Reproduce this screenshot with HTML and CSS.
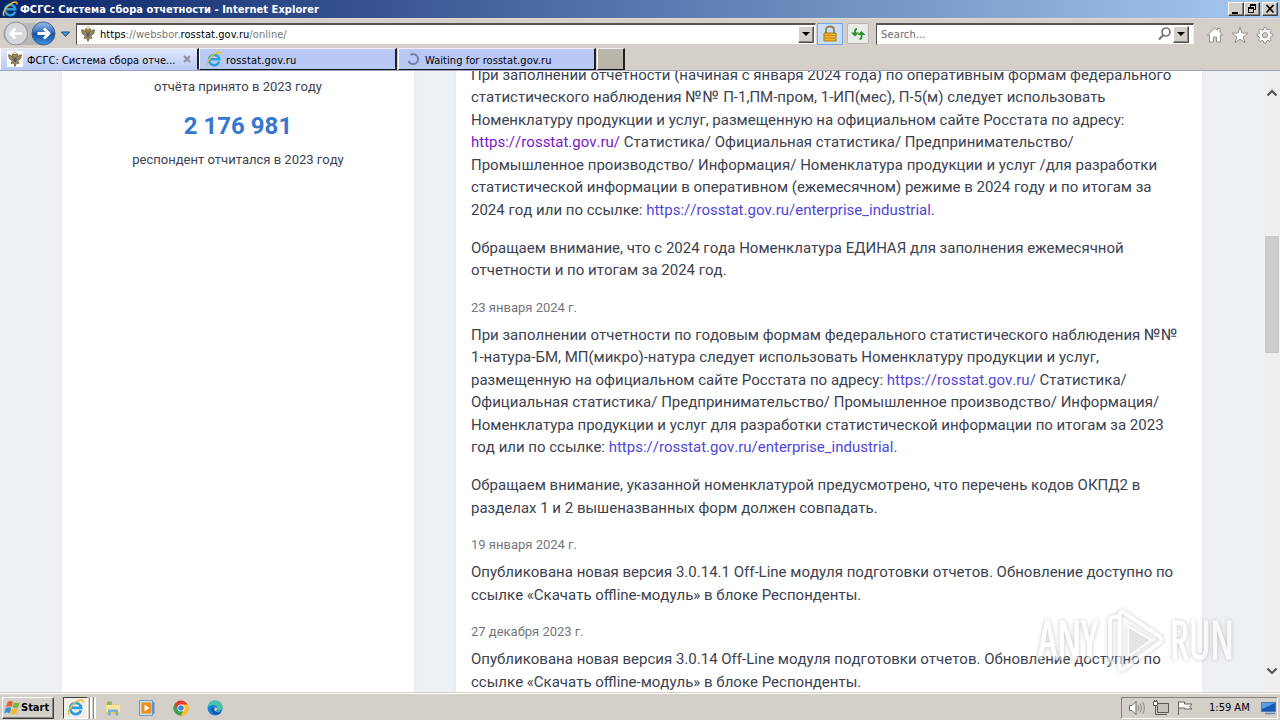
FILE: index.html
```html
<!DOCTYPE html>
<html lang="ru">
<head>
<meta charset="utf-8">
<title>ФСГС: Система сбора отчетности</title>
<link rel="stylesheet" href="styles.css">
</head>
<body>
<svg class="defs" width="0" height="0">
  <defs>
    <linearGradient id="blueBall" x1="0" y1="0" x2="0" y2="1"><stop offset="0" stop-color="#9cc0e8"/><stop offset=".45" stop-color="#2f6fc0"/><stop offset=".5" stop-color="#1450a4"/><stop offset="1" stop-color="#3f96e0"/></linearGradient>
    <symbol id="ie" viewBox="0 0 16 16">
      <path d="M13.2 10.6A5.2 5.2 0 1 1 13.4 8.3H4.6" fill="none" stroke="#2d9fe0" stroke-width="2.5"/>
      <path d="M2.2 15C-.4 12.4 3.5 6 8.500 2.800 12 .5 15.600 .1 15 3.500" fill="none" stroke="#e9c32f" stroke-width="1.400"/>
    </symbol>
    <symbol id="eagle" viewBox="0 0 16 16">
      <path d="M8 4 6.500 2.500 5 3.500 6.200 6 3.200 4 1.500 3.800 2.200 7.500 5.300 10 4 12.500 6.500 12 8 15.500 9.500 12 12 12.500 10.700 10 13.800 7.500 14.500 3.800 12.800 4 9.800 6 11 3.500 9.500 2.500Z" fill="#9b8a45" stroke="#5b5636" stroke-width=".7"/>
      <path d="M6.800 1.800h2.400L8 .3Z" fill="#c9a326"/><path d="M6.500 6.500h3v3.500L8 11.200 6.500 10Z" fill="#4858a0"/>
    </symbol>
  </defs>
</svg>
<header class="titlebar">
  <svg class="title-ico" viewBox="0 0 16 16"><use href="#ie"/></svg>
  <span class="title-text">ФСГС: Система сбора отчетности - Internet Explorer</span>
  <div class="winbtns">
    <span class="wb"><svg viewBox="0 0 14 12"><path d="M3 9h6v2H3z"/></svg></span>
    <span class="wb"><svg viewBox="0 0 14 12"><path d="M5 1h6v6H9V6h1V3H6v1H5z"/><path d="M3 4h6v6H3zm1 2v3h4V6z" fill-rule="evenodd"/></svg></span>
    <span class="wb close"><svg viewBox="0 0 14 12"><path d="M3.500 2 10.500 9.500M10.500 2 3.500 9.500" stroke="#000" stroke-width="1.700"/></svg></span>
  </div>
</header>
<div class="toolbar">
  <svg class="nav" viewBox="0 0 74 28">
    <rect x="3" y="3" width="50" height="22" rx="11" fill="#b9b8b8"/>
    <circle cx="16" cy="13.500" r="11.500" fill="#d5d7dc" stroke="#8d9096"/>
    <path d="M22 13.500H11M15.500 8.500l-5 5 5 5" fill="none" stroke="#fff" stroke-width="2.600"/>
    <circle cx="43.500" cy="13.500" r="11.500" fill="url(#blueBall)" stroke="#4a6288"/>
    <path d="M37.500 13.500h11M44 8.500l5 5-5 5" fill="none" stroke="#fff" stroke-width="2.800"/>
    <path d="M61.500 12h8l-4 4.500z" fill="#4b9bd5" stroke="#20486e"/>
  </svg>
  <div class="field address">
    <svg class="i16" viewBox="0 0 16 16"><use href="#eagle"/></svg>
    <span class="url"><b>https</b>://websbor.<b>rosstat.gov.ru</b>/online/</span>
    <span class="drop"></span>
  </div>
  <span class="lock"><svg viewBox="0 0 16 18"><path d="M4 9V5q0-3.500 4-3.500T12 5v4" fill="none" stroke="#9a8148" stroke-width="1.800"/><path d="M2 8h12v8H2z" fill="#f0b62c" stroke="#a97716"/><path d="M3 10.500h10M3 13.200h10" stroke="#c78917"/></svg></span>
  <span class="refresh"><svg viewBox="0 0 16 16"><path d="M7 3Q5 3 5 5v3M9.500 13q2 0 2-2V8" fill="none" stroke="#269726" stroke-width="1.800"/><path d="M1 6.500h8L5 10.500zM7.500 9h8l-4-4z" fill="#249524"/></svg></span>
  <div class="field search">
    <span class="placeholder">Search...</span>
    <svg class="mag" viewBox="0 0 16 16"><circle cx="9" cy="6" r="4" fill="none" stroke="#77777d" stroke-width="1.700"/><path d="M6.200 9 2 13.500" stroke="#77777d" stroke-width="2.200"/></svg>
    <span class="drop"></span>
  </div>
  <div class="tools">
    <svg viewBox="0 0 18 18"><path d="M1.500 9 9 1.800l2.500 2.400V2.500h2.500v4L16.500 9H14.500v7h-4v-5h-3v5h-4V9z" fill="#fff" stroke="#96928d"/></svg>
    <svg viewBox="0 0 18 18"><path d="M9 1.200 11 7l6 .1-4.800 3.600 1.800 5.900L9 13.100l-5 3.500 1.800-5.900L1 7.100 7 7z" fill="#fff" stroke="#96928d"/></svg>
    <svg viewBox="0 0 18 18"><path d="m8 1.500 2 0 .5 2 1.500.6 1.800-1.100 1.500 1.500-1.100 1.800.6 1.500 2 .4v2l-2 .5-.6 1.500 1.100 1.800-1.500 1.500-1.800-1.100-1.500.6-.5 2h-2l-.5-2-1.500-.6-1.800 1.100-1.500-1.500 1.100-1.800-.6-1.500-2-.5v-2l2-.4.6-1.500-1.100-1.800L4.200 3 6 4.100l1.500-.6z" fill="#fff" stroke="#96928d"/><circle cx="9" cy="9.200" r="2.600" fill="#d4cfc9" stroke="#96928d"/></svg>
  </div>
</div>
<nav class="tabs">
  <div class="tab active"><svg class="i16" viewBox="0 0 16 16"><path fill="#fff" d="M0 0h16v16H0z"/><use href="#eagle"/></svg><span class="t1">ФСГС: Система сбора отче...</span><svg class="tabx" viewBox="0 0 8 8"><path d="M1 1l6 6M7 1 1 7" stroke="#8b8f9d" stroke-width="1.800"/></svg></div>
  <div class="tab"><svg class="i16" viewBox="0 0 16 16"><use href="#ie"/></svg><span class="t2">rosstat.gov.ru</span></div>
  <div class="tab"><svg class="i16" viewBox="0 0 16 16"><path d="M5.500 3.800A5 5 0 1 1 3.500 10" fill="none" stroke="#7582a8" stroke-width="2"/></svg><span class="t3">Waiting for rosstat.gov.ru</span></div>
  <div class="newtab"></div>
</nav>
<main class="page">
  <aside class="side">
    <p>отчёта принято в 2023 году</p>
    <strong>2 176 981</strong>
    <p>респондент отчитался в 2023 году</p>
  </aside>
  <article class="news">
    <p class="first">При заполнении отчетности (начиная с января 2024 года) по оперативным формам федерального<br>статистического наблюдения <span class="num">№№</span> П-1,ПМ-пром, 1-ИП(мес), П-5(м) следует использовать<br>Номенклатуру продукции и услуг, размещенную на официальном сайте Росстата по адресу:<br><a class="visited">https://rosstat.gov.ru/</a> Статистика/ Официальная статистика/ Предпринимательство/<br>Промышленное производство/ Информация/ Номенклатура продукции и услуг /для разработки<br>статистической информации в оперативном (ежемесячном) режиме в 2024 году и по итогам за<br>2024 год или по ссылке: <a>https://rosstat.gov.ru/enterprise_industrial</a>.</p>
    <p>Обращаем внимание, что с 2024 года Номенклатура ЕДИНАЯ для заполнения ежемесячной<br>отчетности и по итогам за 2024 год.</p>
    <time>23 января 2024 г.</time>
    <p class="lead">При заполнении отчетности по годовым формам федерального статистического наблюдения <span class="num">№№</span><br>1-натура-БМ, МП(микро)-натура следует использовать Номенклатуру продукции и услуг,<br>размещенную на официальном сайте Росстата по адресу: <a>https://rosstat.gov.ru/</a> Статистика/<br>Официальная статистика/ Предпринимательство/ Промышленное производство/ Информация/<br>Номенклатура продукции и услуг для разработки статистической информации по итогам за 2023<br>год или по ссылке: <a>https://rosstat.gov.ru/enterprise_industrial</a>.</p>
    <p>Обращаем внимание, указанной номенклатурой предусмотрено, что перечень кодов ОКПД2 в<br>разделах 1 и 2 вышеназванных форм должен совпадать.</p>
    <time>19 января 2024 г.</time>
    <p class="lead">Опубликована новая версия 3.0.14.1 Off-Line модуля подготовки отчетов. Обновление доступно по<br>ссылке «Скачать offline-модуль» в блоке Респонденты.</p>
    <time>27 декабря 2023 г.</time>
    <p class="lead">Опубликована новая версия 3.0.14 Off-Line модуля подготовки отчетов. Обновление доступно по<br>ссылке «Скачать offline-модуль» в блоке Респонденты.</p>
  </article>
  <div class="scroll">
    <svg class="up" viewBox="0 0 12 8"><path d="M1.500 6.500 6 2l4.500 4.500" fill="none" stroke="#555" stroke-width="2.200"/></svg>
    <span class="thumb"></span>
    <svg class="down" viewBox="0 0 12 8"><path d="M1.500 1.500 6 6l4.500-4.500" fill="none" stroke="#555" stroke-width="2.200"/></svg>
  </div>
</main>
<div class="watermark">
  <span class="any">ANY</span>
  <svg viewBox="0 0 60 66"><path d="M3 56V13q0-5 5-5h3M13 60V6q0-5 5-2l36 24q4 4 0 7L18 61q-5 3-5-1" fill="none" stroke="#fff" stroke-width="4"/><path d="M22 18v31l24-17z" fill="#dddfe1" fill-opacity=".55" stroke="#fff" stroke-width="2"/></svg>
  <span class="run">RUN</span>
</div>
<footer class="taskbar">
  <div class="start"><svg viewBox="0 0 18 18"><path d="M4 3q3-2 5.500 0L8 8.500Q5 7 2 8.500z" fill="#e8602b"/><path d="M10.500 3.500q3 1.500 6 0L15 9q-3 1.500-6 0z" fill="#7cb83a"/><path d="M1.800 9.500q3-1.500 5.800 0L6 15q-3-1.500-5.700 0z" fill="#3c8ed6"/><path d="M8.500 10q3 1.500 6 0L13 15.500q-3 1.500-6 0z" fill="#f5b929"/></svg><b>Start</b></div>
  <div class="group"><span class="pressed"><svg viewBox="0 0 16 16"><use href="#ie"/></svg></span><i></i><i></i></div>
  <svg class="q q1" viewBox="0 0 16 16"><path d="M1 3h6l1 1.500h6V14H1z" fill="#e8c860"/><path d="M2 1.500h5V5H2z" fill="#8bb86a"/><path d="M1 5h14v7H1z" fill="#f7e49a"/><path d="M3 15.500V9.500h10v6h-2.500v-3.500h-5v3.500z" fill="#6fb2dc"/></svg>
  <svg class="q q2" viewBox="0 0 16 16"><path d="M.5.500h13v15H.5z" fill="#c9e0f2" stroke="#6b9bc8"/><path d="M13.500 2h2v12h-2z" fill="#5693ce"/><path d="M2.500 2.500h10v11h-10z" fill="#ef8a19"/><path d="m5.500 4.500 5 3.500-5 3.500z" fill="#fff"/></svg>
  <svg class="q q3" viewBox="0 0 16 16"><circle cx="8" cy="8" r="7.500" fill="#e33b2e"/><path d="M1.500 4.200A7.500 7.500 0 0 0 7.500 15.500L11 9.800 8 8 5 9.800z" fill="#35a350"/><path d="M8 4.500h6.700A7.500 7.500 0 0 1 7.500 15.500l3.700-6z" fill="#f8c51c"/><circle cx="8" cy="8" r="3.600" fill="#fff"/><circle cx="8" cy="8" r="2.800" fill="#3f80e8"/></svg>
  <svg class="q q4" viewBox="0 0 16 16"><circle cx="8" cy="8" r="7.500" fill="#1683ce"/><path d="M.7 6.500C1.500 2.500 4.500.5 8 .5c4.500 0 8 3.200 7.500 7-.4 3-4 3.500-6 2.500 1.500-2 .5-5-3-5Q3 5 .7 7z" fill="#47c5a8"/><path d="M5 7.500c-1.500 3 .5 6.500 4.500 7Q13 14.500 14.500 12C11 13.500 7.500 11.500 7.500 8.500z" fill="#0d55a5"/><path d="M8 7.500q2-.5 2 1t-1 2.500q3 1.700 6 0-3 2-6 .5T7.500 9z" fill="#d4cfc9"/></svg>
  <div class="tray">
    <svg viewBox="0 0 18 16"><path d="M1.500 5.500H4l4-4v13l-4-4H1.500z" fill="#fff" stroke="#67645f"/><path d="M10 5q1.500 3 0 6M12.300 3.500q2.500 4.500 0 9M14.700 2q3.300 6 0 12" fill="none" stroke="#8c8984"/></svg>
    <svg viewBox="0 0 18 16"><path d="M5.500 3.500h11v9h-11z" fill="#c4c1bb" stroke="#5b5854"/><path d="M7 14.500h8M3.500 6v8.500H7M2.500 0v1.500M4.500 0v1.500" fill="none" stroke="#5b5854"/><path d="M1.500 1.500h4v4h-4z" fill="#fff" stroke="#5b5854"/></svg>
    <svg viewBox="0 0 18 16"><path d="M2.500 15V1.500M3 2h5.500v2H16l-2.500 3L16 9H8.500V8H3" fill="#fff" stroke="#67645f"/></svg>
    <span class="clock">1:59 AM</span>
    <svg class="desk" viewBox="0 0 16 16"><path d="M.5 2.500h14v9H.5z" fill="#1759b5" stroke="#4679b6"/><path d="M1 3h13L1 9z" fill="#5a9be4"/><path d="M4 13.500h10" stroke="#6b83a8" stroke-width="1.500"/></svg>
  </div>
</footer>
</body>
</html>
```
FILE: styles.css
```css
* { box-sizing: border-box; }
body { margin: 0; width: 1280px; height: 720px; overflow: hidden; display: flex; flex-direction: column; background: #d4cfc9; font-family: "DejaVu Sans Condensed", "DejaVu Sans", sans-serif; font-stretch: condensed; font-size: 11px; color: #000; }
svg { display: block; flex: none; }
.defs { position: absolute; }
.i16 { width: 16px; height: 16px; }
.titlebar { height: 18px; flex: none; display: flex; align-items: center; padding: 0 2px 0 2px; background: linear-gradient(90deg, #0a246a, #a6caf0); }
.title-ico { width: 16px; height: 16px; margin-right: 2px; }
.title-text { color: #fff; font-weight: bold; white-space: nowrap; letter-spacing: .05px; }
.winbtns { margin-left: auto; display: flex; }
.wb { width: 16px; height: 14px; background: #d4cfc9; border: 1px solid; border-color: #fff #404040 #404040 #fff; box-shadow: inset -1px -1px #87837e; }
.wb svg { width: 14px; height: 12px; }
.close { margin-left: 2px; }
.toolbar { height: 30px; flex: none; display: flex; align-items: center; border-top: 1px solid #dedad2; }
.nav { width: 74px; height: 28px; margin-right: 2px; }
.field { height: 22px; background: #fff; display: flex; align-items: center; border: 1px solid; border-color: #59544f #efece8 #d4cfc9 #59544f; border-top-width: 2px; }
.address { width: 740px; padding: 0 1px 0 3px; }
.url { margin-left: 4px; color: #777; white-space: nowrap; letter-spacing: .06px; }
.url b { font-weight: normal; color: #000; }
.drop { width: 16px; height: 17px; margin-left: auto; background: #d4cfc9; border: 1px solid; border-color: #fff #55514d #55514d #fff; box-shadow: inset -1px -1px #87837e; display: flex; align-items: center; justify-content: center; }
.drop::after { content: ""; border: 4px solid transparent; border-top-color: #000; border-bottom: 0; }
.lock { width: 26px; height: 22px; margin-left: 1px; background: #c9def7; border: 1px solid #78a7df; display: flex; align-items: center; justify-content: center; }
.lock svg { width: 16px; height: 18px; }
.refresh { width: 22px; height: 21px; margin-left: 4px; background: #ebebea; border: 1px solid #b5b4b3; border-radius: 2px; display: flex; align-items: center; justify-content: center; }
.refresh svg { width: 16px; height: 16px; }
.search { width: 318px; margin-left: 7px; padding: 0 4px; }
.placeholder { color: #6b6b6b; letter-spacing: .15px; }
.mag { width: 16px; height: 16px; margin-left: auto; }
.search .drop { margin-left: 0; }
.tools { display: flex; gap: 7px; margin-left: 12px; padding-top: 3px; }
.tools svg { width: 18px; height: 18px; }
.tabs { height: 23px; flex: none; display: flex; border-bottom: 1px solid #9da5c0; }
.tab { width: 198px; height: 22px; margin-right: 1px; padding-left: 6px; display: flex; align-items: center; background: #b9c9f5; border: 1px solid; border-color: #efeef0 #202028 #111 #fff; border-right-width: 2px; white-space: nowrap; }
.tab.active { width: 199px; margin: 0; background: linear-gradient(#e0e8fd, #b9caf6); border-bottom-color: #c0cdf0; }
.tab span { margin-left: 4px; padding-top: 2px; letter-spacing: .06px; }
.tab .t1 { letter-spacing: 0; }
.tab .t2 { letter-spacing: .18px; }
.tabx { width: 8px; height: 8px; margin-left: auto; margin-right: 6px; }
.newtab { width: 28px; height: 22px; background: #bab5aa; border: 1px solid; border-color: #f2f0ed #222 #111 #fff; border-right-width: 2px; }
.page { height: 621px; flex: none; overflow: hidden; display: flex; background: #edf1f5; font-family: Roboto, sans-serif; font-stretch: normal; color: #3c4250; }
.side { width: 352px; margin-left: 62px; padding-top: 5px; background: #fff; box-shadow: 0 0 3px #dfe5eb; text-align: center; }
.side p { margin: 0; font-size: 13px; line-height: 22px; font-kerning: none; }
.side strong { display: block; font-size: 24px; line-height: 30px; margin: 13px 0 8px; color: #3777d0; }
.news { width: 746px; margin-left: 42px; padding-left: 15px; background: #fff; box-shadow: 0 0 3px #dfe5eb; font-size: 15px; line-height: 22.5px; font-kerning: none; white-space: nowrap; }
.news p { margin: 15.5px 0 0; }
.news .first { margin-top: -7.250px; }
.news .lead { margin-top: 0; }
.num { font-size: 16px; line-height: 1; letter-spacing: .6px; }
.news a { color: #5046dc; }
.news .visited { color: #7a16c4; }
.news time { display: block; height: 42px; padding-top: 16px; font-size: 13px; line-height: 19px; color: #74767c; font-kerning: normal; }
.scroll { width: 16px; margin-left: auto; background: #efefef; display: flex; flex-direction: column; align-items: center; }
.scroll svg { width: 12px; height: 8px; }
.up { margin-top: 18px; }
.thumb { width: 14px; height: 117px; margin-top: 139px; background: #cbcbcb; }
.down { margin-top: auto; margin-bottom: 17px; }
.watermark { position: absolute; left: 1038px; top: 608px; height: 66px; display: flex; align-items: center; gap: 5px; opacity: .65; filter: drop-shadow(0 0 2px #a4a7ac); font-family: "Open Sans", sans-serif; color: #fff; }
.watermark span { font-size: 52px; line-height: 62px; width: 64px; height: 66px; white-space: nowrap; transform-origin: 0 50%; -webkit-text-stroke: 1px #fff; }
.watermark .any { transform: scaleX(.83); }
.watermark .run { transform: scaleX(.8); }
.watermark svg { width: 58px; height: 66px; }
.taskbar { height: 28px; flex: none; display: flex; align-items: center; padding: 2px 2px 0; border-top: 1px solid #d4cfc9; box-shadow: inset 0 1px #fff; }
.start { width: 52px; height: 22px; display: flex; align-items: center; padding-left: 1px; border: 1px solid; border-color: #fff #404040 #404040 #fff; box-shadow: inset -1px -1px #87837e; }
.start svg { width: 17px; height: 17px; }
.group { display: flex; margin-left: 9px; }
.pressed { width: 25px; height: 22px; background: #f1efec; border: 1px solid; border-color: #404040 #fff #fff #404040; display: flex; align-items: center; justify-content: center; }
.pressed svg { width: 17px; height: 17px; }
.group i { width: 3px; height: 22px; border-right: 2px solid #fff; border-left: 1px solid #8a8681; margin-left: 1px; }
.q { width: 16px; height: 16px; }
.q1 { margin-left: 9px; }
.q2, .q3, .q4 { margin-left: 18px; }
.tray { width: 157px; height: 22px; margin-left: auto; display: flex; align-items: center; padding-left: 6px; border: 1px solid; border-color: #87837e #fff #fff #87837e; }
.tray svg { width: 18px; height: 16px; margin-right: 6px; }
.clock { margin-left: 9px; white-space: nowrap; }
.tray .desk { width: 16px; margin: 0 0 0 auto; }
```
